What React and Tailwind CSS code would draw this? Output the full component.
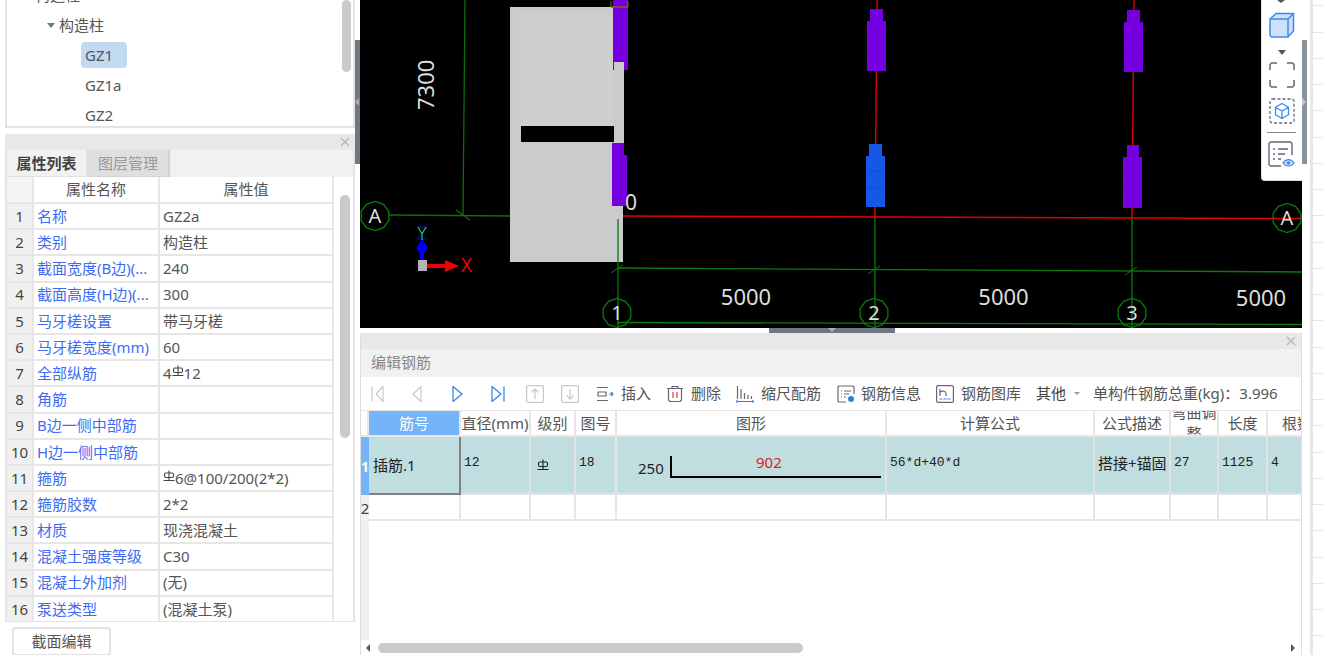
import React from "react";

const props = [
  ["名称", "GZ2a"],
  ["类别", "构造柱"],
  ["截面宽度(B边)(...", "240"],
  ["截面高度(H边)(...", "300"],
  ["马牙槎设置", "带马牙槎"],
  ["马牙槎宽度(mm)", "60"],
  ["全部纵筋", "4|12"],
  ["角筋", ""],
  ["B边一侧中部筋", ""],
  ["H边一侧中部筋", ""],
  ["箍筋", "|6@100/200(2*2)"],
  ["箍筋胶数", "2*2"],
  ["材质", "现浇混凝土"],
  ["混凝土强度等级", "C30"],
  ["混凝土外加剂", "(无)"],
  ["泵送类型", "(混凝土泵)"],
];

function Grade({ className = "" }) {
  return (
    <svg width="12" height="12" viewBox="0 0 12 12" className={className} fill="none" stroke="currentColor" strokeWidth="1.1">
      <rect x="1.5" y="3" width="9" height="4.500" rx="1.500" />
      <path d="M6 .5v10M.5 10.500h11" />
    </svg>
  );
}

function CloseX() {
  return (
    <svg width="10" height="10" viewBox="0 0 10 10" stroke="#b5b5b5" strokeWidth="1.2">
      <path d="M1 1l8 8M9 1l-8 8" />
    </svg>
  );
}

function Tree() {
  return (
    <div className="relative h-[128px] overflow-hidden border-x-2 border-b-2 border-[#e4e4e4] bg-white text-[15px] text-[#555]">
      <div className="-mt-[20px] flex h-[30px] items-center pl-[28px]">构造柱</div>
      <div className="flex h-[30px] items-center pl-[40px]">
        <span className="mr-[4px] h-0 w-0 border-x-4 border-t-[5px] border-x-transparent border-t-[#777]" />
        构造柱
      </div>
      <div className="flex h-[30px] items-center pl-[74px]">
        <span className="flex h-[26px] w-[46px] items-center rounded bg-[#c2d9f2] pl-1">GZ1</span>
      </div>
      <div className="flex h-[30px] items-center pl-[78px]">GZ1a</div>
      <div className="flex h-[30px] items-center pl-[78px]">GZ2</div>
      <div className="absolute right-[2px] top-0 h-[72px] w-[9px] rounded-full bg-[#cacaca]" />
    </div>
  );
}

function PropTable() {
  return (
    <div className="relative h-[444px] overflow-hidden border-x-2 border-[#e4e4e4] bg-white">
      <div className="grid w-[328px] grid-cols-[27px_126px_174px] text-[15px]">
        <div className="h-[27px] border-b-2 border-r-2 border-[#e6e6e6] bg-[#f4f4f4]" />
        <div className="flex h-[27px] items-center justify-center border-b-2 border-r-2 border-[#e6e6e6] text-[#555]">属性名称</div>
        <div className="flex h-[27px] items-center justify-center border-b-2 border-r-2 border-[#e6e6e6] text-[#555]">属性值</div>
        {props.map(([name, value], i) => (
          <React.Fragment key={i}>
            <div className="flex h-[26.2px] items-center justify-center border-b-2 border-r-2 border-[#e6e6e6] bg-[#f0f0f0] text-[#444]">{i + 1}</div>
            <div className="flex h-[26.2px] items-center whitespace-nowrap border-b-2 border-r-2 border-[#e6e6e6] pl-[3px] text-[#3f6cf2]">{name}</div>
            <div className="flex h-[26.2px] items-center whitespace-nowrap border-b-2 border-r-2 border-[#e6e6e6] pl-[3px] text-[#555]">
              {value.includes("|") ? (
                <>
                  {value.split("|")[0]}
                  <Grade className="mb-1 text-[#444]" />
                  {value.split("|")[1]}
                </>
              ) : (
                value
              )}
            </div>
          </React.Fragment>
        ))}
      </div>
      <div className="absolute right-[3px] top-[18px] h-[243px] w-[10px] rounded-full bg-[#cacaca]" />
    </div>
  );
}

function LeftColumn() {
  return (
    <div className="relative w-[360px] shrink-0 pl-[5px] pr-[5px]">
      <Tree />
      <div className="h-[6px]" />
      <div className="flex h-[16px] items-center justify-end bg-[#e8e8e8] pr-[5px]">
        <CloseX />
      </div>
      <div className="flex h-[27px] border-x-2 border-[#e4e4e4] bg-[#f1f1f1] text-[15px]">
        <div className="flex w-[81px] items-center justify-center border-b border-r-2 border-[#e0e0e0] font-bold text-[#444]">属性列表</div>
        <div className="flex w-[82px] items-center justify-center border-b border-r-2 border-[#d2d2d2] bg-[#dfdfdf] text-[#999]">图层管理</div>
      </div>
      <PropTable />
      <div className="h-[1px] bg-[#e4e4e4]" />
      <div className="ml-[7px] mt-[5px] flex h-[29px] w-[99px] items-center justify-center rounded border-2 border-[#e2e2e2] text-[15px] text-[#555]">截面编辑</div>
      <div className="absolute left-[355px] top-[40px] flex h-[124px] w-[5px] items-center bg-[#6f7782]">
        <span className="h-0 w-0 border-y-4 border-r-4 border-y-transparent border-r-[#aab0b8]" />
      </div>
    </div>
  );
}

function Column({ x, y, color, capW, capH = 12, w, h, capX }) {
  return (
    <g fill={color}>
      <rect x={capX} y={y} width={capW} height={capH} />
      <rect x={x} y={y + capH} width={w} height={h} />
      <path d={`M${x} ${y + capH + 15}h${w}M${x} ${y + capH + 32}h${w}`} stroke="#000" strokeOpacity=".2" strokeWidth=".6" />
    </g>
  );
}

function Axis({ cx, cy, label }) {
  const pts = Array.from({ length: 10 }, (_, i) => {
    const a = (i * Math.PI) / 5 + Math.PI / 10;
    return `${(cx + 14.5 * Math.cos(a)).toFixed(1)},${(cy + 14.5 * Math.sin(a)).toFixed(1)}`;
  }).join(" ");
  return (
    <g>
      <polygon points={pts} fill="none" stroke="#0c7a0c" strokeWidth="1.3" />
      <text x={cx} y={cy + 7} textAnchor="middle" fontSize="20" fill="#dedede">{label}</text>
    </g>
  );
}

function CadView() {
  return (
    <svg className="block h-[328px] w-[942px] bg-black" viewBox="360 0 942 328" style={{ fontFamily: '"Noto Sans", sans-serif' }}>
      <path d="M465 0L463 215M389 215L510 216M456 210L470 220" stroke="#0c6e0c" strokeWidth="1.3" fill="none" />
      <rect x="510" y="7" width="113" height="255" fill="#cbcbcb" />
      <rect x="521" y="14" width="92" height="112" fill="#cfcfcf" />
      <rect x="521" y="126" width="93" height="16" fill="#000" />
      <path d="M613 0h15v70h-15z" fill="#7400e2" />
      <rect x="614" y="62" width="10" height="81" fill="#cbcbcb" />
      <path d="M611 1v6h17V1M611 7h17" stroke="#7a6a10" strokeWidth="1" fill="none" />
      <path d="M612 143h12v12h3v51h-15z" fill="#7400e2" />
      <text x="625" y="210" fontSize="21" fill="#dedede">0</text>
      <text x="0" y="0" fontSize="22" fill="#dedede" transform="translate(434 110) rotate(-90)">7300</text>

      <path d="M623 216L1302 218.500" stroke="#e80000" strokeWidth="1.5" />
      <path d="M877 0L875 218M1134 0L1132 218" stroke="#d80000" strokeWidth="1.5" />
      <path d="M618 219V328M875 218V328M1132 218V328" stroke="#0c7a0c" strokeWidth="1.3" />
      <path d="M617 268L1302 272M617 322.500L1302 324.500" stroke="#0c7a0c" strokeWidth="1.4" />
      <path d="M611 273l12-8M868 274l12-8M1125 275l12-8" stroke="#0c7a0c" strokeWidth="1" />

      <Column x={867} y={9} capX={870} capW={13} w={19} h={50} color="#7400e2" />
      <Column x={866} y={144} capX={869} capW={13} w={19} h={51} color="#1558e8" />
      <Column x={1124} y={10} capX={1127} capW={13} w={19} h={50} color="#7400e2" />
      <Column x={1123} y={145} capX={1127} capW={12} w={19} h={51} color="#7400e2" />

      <Axis cx={375} cy={216} label="A" />
      <Axis cx={617} cy={313} label="1" />
      <Axis cx={874} cy={313} label="2" />
      <Axis cx={1132} cy={313} label="3" />
      <Axis cx={1287} cy={218} label="A" />

      <text x="746" y="305" textAnchor="middle" fontSize="22" fill="#dedede">5000</text>
      <text x="1003.500" y="305" textAnchor="middle" fontSize="22" fill="#dedede">5000</text>
      <text x="1261" y="306" textAnchor="middle" fontSize="22" fill="#dedede">5000</text>

      <rect x="418" y="260" width="9" height="11" fill="#b4b4b4" />
      <path d="M427 264h18v-4l14 6-14 6v-4h-18z" fill="#f00000" />
      <path d="M422 260v-8" stroke="#0000f0" strokeWidth="4" />
      <path d="M422 239l6 9-6 8-6-8z" fill="#0000f0" />
      <path d="M417 227h10l-10 12h10" stroke="#1010c0" strokeWidth="1" fill="none" />
      <path d="M418 227l4 7 4-7M422 234v6" stroke="#16c060" strokeWidth="1.3" fill="none" />
      <text x="461" y="272" fontSize="19" fill="#f00000">X</text>
    </svg>
  );
}

function ViewTools() {
  return (
    <div className="absolute right-0 top-0 flex h-[181px] w-[41px] flex-col items-center rounded-bl border-b border-l border-[#ddd] bg-white pr-[1px] pt-[12px] shadow">
      <span className="absolute left-[15px] top-0 h-0 w-0 border-x-[4px] border-t-[3px] border-x-transparent border-t-[#555]" />
      <svg width="26" height="26" viewBox="0 0 26 26" fill="none" stroke="#3d8bf0" strokeWidth="1.5" strokeLinejoin="round">
        <path d="M1 7l6-5.500h17.500V19L19 25H2.500L1 23.500z" fill="#cfe1f8" />
        <path d="M1 7h18v18M19 7l5.500-5.500" />
      </svg>
      <span className="mt-[12px] h-0 w-0 border-x-[4.5px] border-t-[5px] border-x-transparent border-t-[#555]" />
      <svg className="mt-[7px]" width="26" height="26" viewBox="0 0 26 26" fill="none" stroke="#667" strokeWidth="1.5">
        <path d="M1 8V2.500L2.500 1H8M18 1h5.500L25 2.500V8M25 18v5.500L23.500 25H18M8 25H2.500L1 23.500V18" />
      </svg>
      <svg className="mt-[10px]" width="26" height="26" viewBox="0 0 26 26" fill="none">
        <rect x="1" y="1" width="24" height="24" rx="2.500" stroke="#667" strokeWidth="1.3" strokeDasharray="3 2" />
        <path d="M13 5.500l6.500 3.700v7.500L13 20.500l-6.500-3.800V9.200zM6.500 9.200L13 13l6.500-3.800M13 13v7.500" stroke="#3d8bf0" strokeWidth="1.3" strokeLinejoin="round" />
      </svg>
      <div className="mt-[8px] h-[1px] w-[29px] bg-[#888]" />
      <svg className="mt-[8px]" width="27" height="27" viewBox="0 0 27 27" fill="none">
        <path d="M13 25H2.500L1 23.500V2.500L2.500 1h20L24 2.500V14" stroke="#667" strokeWidth="1.4" />
        <path d="M5 8h2M10 8h10M5 13h2M10 13h7M5 18h2M10 18h3" stroke="#667" strokeWidth="1.3" />
        <path d="M15 22c3-4.500 8-4.500 11 0-3 4-8 4-11 0z" fill="#cfe1f8" stroke="#3d8bf0" strokeWidth="1.2" />
        <circle cx="20.500" cy="22" r="1.800" fill="#3d8bf0" />
      </svg>
    </div>
  );
}

function ToolIcon({ children, className = "" }) {
  return (
    <svg className={`shrink-0 ${className}`} width="18" height="18" viewBox="0 0 18 18" fill="none" strokeWidth="1.2" strokeLinejoin="round">
      {children}
    </svg>
  );
}

function Toolbar() {
  return (
    <div className="flex h-[34px] items-center whitespace-nowrap border-b border-[#e6e6e6] bg-white pl-[10px] text-[15px] text-[#555]">
      <ToolIcon><path d="M1 1.500v15M12 1.500v15L5 9z" stroke="#c8c8c8" /></ToolIcon>
      <ToolIcon className="ml-[22px]"><path d="M10 1.500v15L2 9z" stroke="#c8c8c8" /></ToolIcon>
      <ToolIcon className="ml-[21px]"><path d="M3 1.500v15L12 9z" stroke="#2f80ed" /></ToolIcon>
      <ToolIcon className="ml-[22px]"><path d="M2 1.500v15L11 9zM14 1.500v15" stroke="#2f80ed" /></ToolIcon>
      <ToolIcon className="ml-[18px]"><rect x=".6" y=".6" width="16.800" height="16.800" rx="1.500" stroke="#c8c8c8" /><path d="M9 14V4M5.500 7.500L9 4l3.500 3.500" stroke="#c8c8c8" /></ToolIcon>
      <ToolIcon className="ml-[17px]"><rect x=".6" y=".6" width="16.800" height="16.800" rx="1.500" stroke="#c8c8c8" /><path d="M9 4v10M5.500 10.500L9 14l3.500-3.500" stroke="#c8c8c8" /></ToolIcon>
      <ToolIcon className="ml-[17px]"><path d="M1 2.500h11M1 15.500h11M2 7h8v4H2z" stroke="#667" /><path d="M13 9h4M15 7l2 2-2 2" stroke="#2f80ed" /></ToolIcon>
      <span className="ml-[7px]">插入</span>
      <ToolIcon className="ml-[15px]"><path d="M1 3.500h16M6 3.500V1.500h6v2M2.500 3.500V15l1.500 1.500h10L15.500 15V3.500" stroke="#667" /><path d="M7 7v6M11 7v6" stroke="#e04040" /></ToolIcon>
      <span className="ml-[7px]">删除</span>
      <ToolIcon className="ml-[15px]"><path d="M1.500 1v13M5 4v10M8.500 8v6M12 10v4M15.500 11v3" stroke="#667" /><path d="M1 16.500h16M1 15v3M17 15v3" stroke="#2f80ed" /></ToolIcon>
      <span className="ml-[7px]">缩尺配筋</span>
      <ToolIcon className="ml-[16px]"><path d="M9 17H2L1 16V2l1-1h14l1 1v7" stroke="#667" /><path d="M4 6h1M7 6h7M4 9h1M7 9h5M4 12h1M7 12h2" stroke="#667" /><circle cx="14" cy="14" r="3" fill="#2f80ed" /></ToolIcon>
      <span className="ml-[6px]">钢筋信息</span>
      <ToolIcon className="ml-[15px]"><rect x=".6" y=".6" width="16.800" height="16.800" rx="1.500" stroke="#667" /><path d="M4 4v7M4 7c3-1.500 6-1 6 1.500V11" stroke="#667" /><path d="M3.500 14h11" stroke="#2f80ed" strokeDasharray="3 1" /></ToolIcon>
      <span className="ml-[7px]">钢筋图库</span>
      <span className="ml-[15px] text-[#444]">其他</span>
      <span className="ml-[8px] h-0 w-0 border-x-[3px] border-t-[3px] border-x-transparent border-t-[#999]" />
      <span className="ml-[13px]">单构件钢筋总重(kg)：3.996</span>
    </div>
  );
}

function HCell({ children, className = "" }) {
  return <div className={`flex items-center justify-center overflow-hidden whitespace-nowrap border-b-2 border-r-2 border-[#e6e6e6] text-[#555] ${className}`}>{children}</div>;
}

function BCell({ children, className = "" }) {
  return <div className={`flex items-center overflow-hidden whitespace-nowrap border-b-2 border-r-2 border-[#e0e4e4] pl-[3px] ${className}`}>{children}</div>;
}

function RebarGrid() {
  const mono = "pb-[5px] font-['Liberation_Mono','Noto_Sans_CJK_SC',monospace] text-[13px] text-[#222]";
  return (
    <div className="relative min-h-0 flex-1 overflow-hidden bg-white">
      <div className="grid grid-cols-[8px_92px_70px_45px_41px_270px_208px_76px_48px_49px_35px] grid-rows-[26px_58px_26px] text-[15px]">
        <HCell />
        <HCell className="bg-[#75b4f8] !text-white">筋号</HCell>
        <HCell>直径(mm)</HCell>
        <HCell>级别</HCell>
        <HCell>图号</HCell>
        <HCell>图形</HCell>
        <HCell>计算公式</HCell>
        <HCell>公式描述</HCell>
        <HCell className="!whitespace-normal text-center leading-[21px]">弯曲调整</HCell>
        <HCell>长度</HCell>
        <HCell className="!justify-start pl-[14px]">根数</HCell>

        <div className="flex items-center justify-center overflow-hidden bg-[#75b4f8] text-[14px] font-bold text-white">1</div>
        <div className="flex items-center overflow-hidden whitespace-nowrap border-b-2 border-r-2 border-[#808080] bg-[#c0dddf] pl-[4px] text-[#222]">插筋.1</div>
        <BCell className={`bg-[#c0dddf] ${mono}`}>12</BCell>
        <BCell className="bg-[#c0dddf] pb-[1px] pl-[6px] text-[#222]"><Grade /></BCell>
        <BCell className={`bg-[#c0dddf] ${mono}`}>18</BCell>
        <BCell className="relative bg-[#c0dddf]">
          <span className="absolute left-[21px] top-[20px] text-[15px] text-[#222]">250</span>
          <span className="absolute left-[53px] right-[4px] top-[19px] h-[22px] border-b-2 border-l-2 border-black" />
          <span className="absolute left-[139px] top-[14px] text-[15px] text-[#e02020]">902</span>
        </BCell>
        <BCell className={`bg-[#c0dddf] ${mono}`}>56*d+40*d</BCell>
        <BCell className="bg-[#c0dddf] pb-[3px] text-[#222]">搭接+锚固</BCell>
        <BCell className={`bg-[#c0dddf] ${mono}`}>27</BCell>
        <BCell className={`bg-[#c0dddf] ${mono}`}>1125</BCell>
        <BCell className={`bg-[#c0dddf] ${mono}`}>4</BCell>

        <div className="flex items-center justify-center overflow-hidden bg-[#f0f0f0] text-[#444]">2</div>
        {Array.from({ length: 10 }).map((_, i) => (
          <BCell key={i} className="!border-[#e6e6e6]" />
        ))}
      </div>
      <div className="absolute bottom-0 left-0 top-[110px] w-[8px] bg-[#f0f0f0]" />
    </div>
  );
}

function BottomPanel() {
  return (
    <div className="relative flex h-[322px] flex-col border-x border-[#ddd]">
      <div className="flex h-[16px] shrink-0 items-center justify-end bg-[#e8e8e8] pr-[5px]">
        <CloseX />
      </div>
      <div className="flex h-[28px] shrink-0 items-center bg-[#f1f1f1] pb-[2px] pl-[10px] text-[15px] text-[#888]">编辑钢筋</div>
      <Toolbar />
      <RebarGrid />
      <div className="flex h-[15px] shrink-0 items-center bg-white pl-[5px] pr-[6px]">
        <span className="h-0 w-0 border-y-[4px] border-r-[4px] border-y-transparent border-r-[#555]" />
        <div className="ml-[8px] h-[10px] w-[425px] rounded-full bg-[#cacaca]" />
        <span className="ml-auto h-0 w-0 border-y-[4px] border-l-[4px] border-y-transparent border-l-[#555]" />
      </div>
    </div>
  );
}

function RightGutter() {
  return (
    <div className="relative flex w-[21px] shrink-0 overflow-hidden bg-white">
      <div className="absolute left-0 top-[40px] flex h-[124px] w-[5px] items-center bg-[#8a929c]">
        <span className="h-0 w-0 border-y-4 border-l-4 border-y-transparent border-l-[#c4c8cc]" />
      </div>
      <div className="ml-[8px] w-[2px] bg-[#e8e8e8]" />
      <div className="-mt-[20px] flex-1">
        {Array.from({ length: 26 }).map((_, i) => (
          <div key={i} className="h-[26.25px] border-b border-l border-[#e6e6e6]" />
        ))}
      </div>
    </div>
  );
}

export default function App() {
  return (
    <div className="flex h-[655px] w-[1323px] overflow-hidden bg-white font-['Noto_Sans','Noto_Sans_CJK_SC',sans-serif]">
      <LeftColumn />
      <div className="flex w-[942px] shrink-0 flex-col">
        <div className="relative">
          <CadView />
          <ViewTools />
        </div>
        <div className="relative h-[5px] bg-white">
          <div className="ml-[409px] flex h-[5px] w-[126px] justify-center bg-[#6f7782]">
            <span className="h-0 w-0 border-x-4 border-t-4 border-x-transparent border-t-[#aab0b8]" />
          </div>
        </div>
        <BottomPanel />
      </div>
      <RightGutter />
    </div>
  );
}
